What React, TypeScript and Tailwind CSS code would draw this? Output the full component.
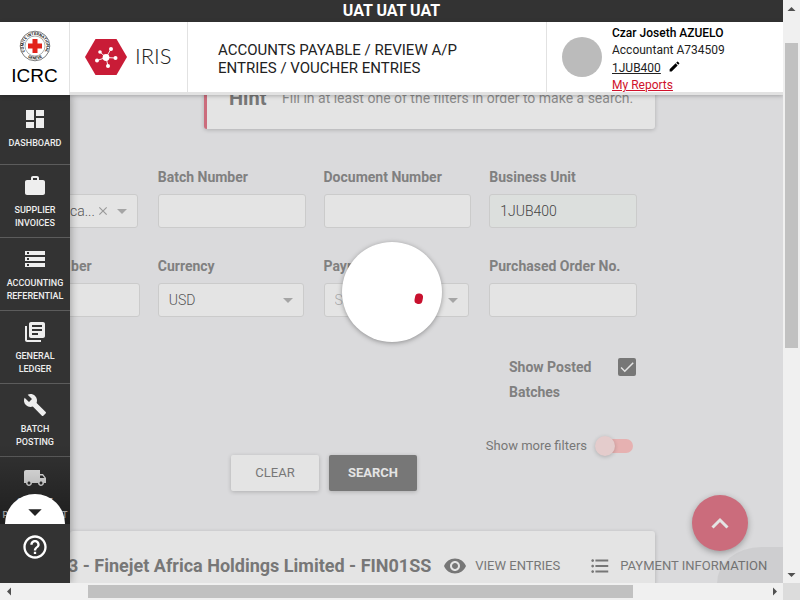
import { useState } from "react";
import type { ReactNode } from "react";
import {
  MdDashboard,
  MdWork,
  MdStorage,
  MdLibraryBooks,
  MdBuild,
  MdLocalShipping,
  MdHelpOutline,
  MdEdit,
  MdArrowDropDown,
  MdRemoveRedEye,
  MdFormatListBulleted,
  MdClose,
  MdCheck,
} from "react-icons/md";

const fieldBox =
  "block h-[34px] rounded-[3px] border border-[#cbcbcb] px-[10px] text-sm font-light outline-none";
const fieldLabel = "block h-[18px] text-sm leading-[18px] font-bold whitespace-nowrap text-[#808080]";

function TextField({ id, label, value, tinted }: { id: string; label: string; value?: string; tinted?: boolean }) {
  return (
    <div>
      <label htmlFor={id} className={fieldLabel}>
        {label}
      </label>
      <input
        id={id}
        type="text"
        defaultValue={value}
        className={`${fieldBox} mt-2 w-full text-[#444] ${tinted ? "bg-[#dcdfdd]" : "bg-[#e4e4e4]"}`}
      />
    </div>
  );
}

function SelectField({ id, label, value, muted }: { id: string; label: string; value: string; muted?: boolean }) {
  return (
    <div className="mr-[2px]">
      <label htmlFor={id} className={fieldLabel}>
        {label}
      </label>
      <div className="relative mt-2">
        <select
          id={id}
          className={`${fieldBox} w-full appearance-none bg-[#e4e4e4] ${muted ? "text-[#aaa]" : "text-[#555]"}`}
        >
          <option>{value}</option>
        </select>
        <MdArrowDropDown className="pointer-events-none absolute top-[5px] right-1 size-6 text-[#a5a5a5]" />
      </div>
    </div>
  );
}

function NavItem({ icon, lines, first }: { icon: ReactNode; lines: string[]; first?: boolean }) {
  return (
    <a
      href="#"
      className={`flex shrink-0 flex-col items-center gap-[6px] border-b border-[#5c5c5c] text-[9px] leading-[13px] font-medium text-[#eee] ${
        first ? "pt-3 pb-[14px]" : "pt-[9px] pb-[7px]"
      }`}
    >
      {icon}
      <span className="text-center">
        {lines.map((l) => (
          <span key={l} className="block whitespace-nowrap">
            {l}
          </span>
        ))}
      </span>
    </a>
  );
}

function IcrcLogo() {
  return (
    <svg viewBox="0 0 32 32" className="size-8" aria-hidden="true">
      <defs>
        <path id="ringTop" d="M6.500 22.500A11.300 11.300 0 1 1 25.500 22.500" />
        <path id="ringBottom" d="M7 26A13.500 13.500 0 0 0 25 26" />
      </defs>
      <circle cx="16" cy="16" r="14.800" fill="#fff" stroke="#444" strokeWidth=".7" />
      <circle cx="16" cy="16" r="10" fill="none" stroke="#777" strokeWidth=".6" />
      <g fill="#222" fontSize="4" fontWeight="700" textAnchor="middle">
        <text>
          <textPath href="#ringTop" startOffset="50%">
            COMITE INTERNATIONAL
          </textPath>
        </text>
        <text>
          <textPath href="#ringBottom" startOffset="50%">
            GENEVE
          </textPath>
        </text>
      </g>
      <path d="M13.500 9h5v4.500H23v5h-4.500V23h-5v-4.500H9v-5h4.500z" fill="#e2231a" />
    </svg>
  );
}

function IrisLogo() {
  return (
    <svg viewBox="0 0 42 36" className="h-9 w-[42px]" aria-hidden="true">
      <path d="M10.500 0h21L42 18 31.500 36h-21L0 18z" fill="#c91c37" />
      <path
        d="M21 18.500L15 13M21 18.500L26 10M21 18.500L30.500 19M21 18.500L23 27M21 18.500L12 21.500"
        stroke="#fff"
        strokeWidth=".9"
      />
      <g fill="#fff">
        <circle cx="21" cy="18.500" r="3.400" />
        <circle cx="15" cy="13" r="1.800" />
        <circle cx="26" cy="10" r="2" />
        <circle cx="30.500" cy="19" r="2" />
        <circle cx="23" cy="27" r="2" />
        <circle cx="12" cy="21.500" r="2" />
      </g>
    </svg>
  );
}

function Header() {
  return (
    <header className="relative z-20 flex h-[73px] shrink-0 bg-white shadow-[0_1px_4px_rgba(0,0,0,0.25)]">
      <div className="flex w-[70px] shrink-0 flex-col items-center border-r border-[#e2e2e2] pt-2">
        <IcrcLogo />
        <span className="mt-1 font-['Liberation_Sans',sans-serif] text-[19px] leading-5 text-black">ICRC</span>
      </div>
      <div className="flex min-w-0 grow border-b-[3px] border-[#e2e2e2]">
        <div className="flex w-[118px] shrink-0 items-center gap-2 border-r border-[#e2e2e2] pl-[15px]">
          <IrisLogo />
          <span className="pb-[3px] font-['Lato',sans-serif] text-[22px] leading-6 font-light text-[#222]">IRIS</span>
        </div>
        <h1 className="min-w-0 flex-1 self-center pt-1 pr-16 pl-[30px] text-[15px] leading-[18px] text-[#222] uppercase">
          Accounts payable / Review A/P entries / Voucher entries
        </h1>
        <div className="flex w-[237px] shrink-0 border-l border-[#e2e2e2] pl-[15px]">
          <div className="size-10 shrink-0 self-center rounded-full bg-[#bbb]" />
          <div className="ml-[10px] flex flex-col items-start pt-[3px] text-xs leading-[17px] text-[#222]">
            <span className="font-medium text-black">Czar Joseth AZUELO</span>
            <span>Accountant A734509</span>
            <span className="flex items-center gap-[7px] pt-px">
              <a href="#" className="underline">
                1JUB400
              </a>
              <button type="button" aria-label="Edit unit" className="mb-1">
                <MdEdit className="size-[13px] text-black" />
              </button>
            </span>
            <a href="#" className="text-[#d0112b] underline">
              My Reports
            </a>
          </div>
        </div>
      </div>
    </header>
  );
}

function Sidebar() {
  return (
    <nav className="relative z-10 flex w-[70px] shrink-0 flex-col bg-[#333] shadow-[1px_0_8px_rgba(0,0,0,0.3)]">
      <div className="relative flex min-h-0 grow flex-col overflow-hidden">
        <NavItem first icon={<MdDashboard className="size-6" />} lines={["DASHBOARD"]} />
        <NavItem icon={<MdWork className="size-6" />} lines={["SUPPLIER", "INVOICES"]} />
        <NavItem icon={<MdStorage className="size-6" />} lines={["ACCOUNTING", "REFERENTIAL"]} />
        <NavItem icon={<MdLibraryBooks className="size-6" />} lines={["GENERAL", "LEDGER"]} />
        <NavItem icon={<MdBuild className="size-6" />} lines={["BATCH", "POSTING"]} />
        <NavItem icon={<MdLocalShipping className="size-6" />} lines={["SERVICE", "PROCUREMENT"]} />
        <div className="pointer-events-none absolute inset-x-0 bottom-0 h-20 bg-linear-to-b from-transparent to-black/40" />
        <button
          type="button"
          aria-label="Scroll menu down"
          className="absolute bottom-0 left-[5px] flex h-[30px] w-[60px] items-center justify-center rounded-t-full bg-white pt-[6px]"
        >
          <MdArrowDropDown className="size-8 text-[#222]" />
        </button>
      </div>
      <a href="#" aria-label="Help" className="flex h-[59px] shrink-0 justify-center pt-[9px] text-white">
        <MdHelpOutline className="size-7" />
      </a>
    </nav>
  );
}

function Filters() {
  const [posted, setPosted] = useState(true);
  return (
    <form className="mt-[39px] mr-[146px] -ml-[78px]" onSubmit={(e) => e.preventDefault()}>
      <div className="grid grid-cols-4 gap-x-[18px] gap-y-[29px]">
        <div className="relative mr-[2px] pt-[26px]">
          <select
            aria-label="Supplier"
            className={`${fieldBox} w-full appearance-none bg-[#e4e4e4] pr-[42px] text-[#555] [text-align-last:right]`}
          >
            <option>ca...</option>
          </select>
          <button type="button" aria-label="Clear supplier" className="absolute right-7 bottom-[10px]">
            <MdClose className="size-[14px] text-[#999]" />
          </button>
          <MdArrowDropDown className="pointer-events-none absolute right-1 bottom-[5px] size-6 text-[#a5a5a5]" />
        </div>
        <TextField id="batch" label="Batch Number" />
        <TextField id="document" label="Document Number" />
        <TextField id="unit" label="Business Unit" value="1JUB400" tinted />
        <div>
          <label htmlFor="number" className={`${fieldLabel} pl-[79px]`}>
            ber
          </label>
          <input id="number" type="text" className={`${fieldBox} mt-2 w-full bg-[#e4e4e4] text-[#444]`} />
        </div>
        <SelectField id="currency" label="Currency" value="USD" />
        <SelectField id="payment" label="Payment" value="Select" muted />
        <TextField id="po" label="Purchased Order No." />
      </div>

      <div className="mt-[38px] flex items-start justify-end">
        <label htmlFor="posted" className="w-[109px] text-sm leading-[25px] font-bold text-[#808080]">
          Show Posted Batches
        </label>
        <span className="relative mt-[3px] mr-px size-[18px]">
          <input
            id="posted"
            type="checkbox"
            checked={posted}
            onChange={() => setPosted(!posted)}
            className="block size-[18px] appearance-none rounded-[2px] bg-[#777]"
          />
          {posted && <MdCheck className="pointer-events-none absolute inset-0 size-[18px] text-[#e4e4e4]" />}
        </span>
      </div>

      <div className="mt-[31px] flex items-start justify-between">
        <div className="mt-[19px] ml-[239px] flex gap-[10px] text-[13px] text-[#777]">
          <button type="reset" className="h-9 w-[88px] rounded-[2px] bg-[#e4e4e4] shadow-[0_1px_4px_rgba(0,0,0,0.2)]">
            CLEAR
          </button>
          <button
            type="submit"
            className="h-9 w-[88px] rounded-[2px] bg-[#777] font-bold text-[#e4e4e4] shadow-[0_1px_4px_rgba(0,0,0,0.2)]"
          >
            SEARCH
          </button>
        </div>
        <label className="mr-1 flex items-center gap-2 text-[13px] leading-5 text-[#777]">
          Show more filters
          <span className="relative flex h-5 w-[38px] items-center">
            <input
              type="checkbox"
              role="switch"
              className="peer ml-[3px] h-[14px] w-[35px] appearance-none rounded-full bg-[#e6b1b1]"
            />
            <span className="pointer-events-none absolute top-0 left-0 size-5 rounded-full bg-[#e4cccc] shadow-[0_1px_4px_rgba(0,0,0,0.2)] peer-checked:left-[18px]" />
          </span>
        </label>
      </div>
    </form>
  );
}

function ScrollArrow({ path }: { path: string }) {
  return (
    <svg viewBox="0 0 17 17" className="size-[17px] shrink-0" aria-hidden="true">
      <path d={path} fill="#505050" />
    </svg>
  );
}

export default function App() {
  return (
    <div className="grid h-screen grid-cols-[minmax(0,1fr)_17px] grid-rows-[minmax(0,1fr)_17px] overflow-hidden bg-[#f0f0f0] font-['Roboto',sans-serif]">
      <div className="relative flex min-h-0 flex-col overflow-hidden bg-[#dadadc]">
        <div className="h-[22px] shrink-0 bg-[#333] text-center text-base leading-[21px] font-bold text-white">
          UAT UAT UAT
        </div>
        <Header />
        <div className="flex min-h-0 grow">
          <Sidebar />
          <main className="relative min-w-0 grow overflow-hidden">
            <section className="-mt-7 mr-32 ml-[134px] flex h-[62px] items-center rounded-[3px] border-l-[3px] border-[#cb6c7c] bg-[#e4e4e4] pl-[22px] whitespace-nowrap text-[#777] shadow-[0_1px_4px_rgba(0,0,0,0.2)]">
              <h2 className="w-[53px] text-xl leading-6 font-bold">Hint</h2>
              <p className="text-sm text-[#8a8a8a]">Fill in at least one of the filters in order to make a search.</p>
            </section>
            <Filters />
            <section className="mt-10 mr-32 flex h-[69px] items-center rounded-t-[3px] bg-[#e4e4e4] text-[13px] whitespace-nowrap text-[#777] shadow-[0_1px_4px_rgba(0,0,0,0.2)]">
              <h2 className="-ml-[2px] text-lg leading-6 font-bold">3 - Finejet Africa Holdings Limited - FIN01SS</h2>
              <button type="button" className="ml-3 flex items-center gap-2">
                <MdRemoveRedEye className="size-6" />
                VIEW ENTRIES
              </button>
              <button type="button" className="ml-7 flex items-center gap-2">
                <MdFormatListBulleted className="size-6 p-px" />
                PAYMENT INFORMATION
              </button>
            </section>
          </main>
        </div>
        <div className="pointer-events-none absolute right-0 bottom-0 h-9 w-[66px] bg-black/5 [border-top-left-radius:44px_36px]" />
        <button
          type="button"
          aria-label="Back to top"
          className="absolute right-[35px] bottom-8 flex size-14 items-center justify-center rounded-full bg-[#cb6c7c] shadow-[0_2px_6px_rgba(0,0,0,0.3)]"
        >
          <svg viewBox="0 0 18 12" className="h-3 w-[18px]" fill="none" aria-hidden="true">
            <path d="M1.500 10.500L9 3l7.500 7.500" stroke="#e4e4e4" strokeWidth="3" />
          </svg>
        </button>
        <div
          role="status"
          aria-label="Loading"
          className="absolute top-1/2 left-1/2 z-30 size-[100px] -translate-1/2 rounded-full bg-white shadow-[0_1px_5px_rgba(0,0,0,0.35)]"
        >
          <svg viewBox="0 0 100 100" className="size-full" aria-hidden="true">
            <path d="M77 55.500L76.500 58" stroke="#c8102e" strokeWidth="8" strokeLinecap="round" />
          </svg>
        </div>
      </div>

      <div className="flex flex-col">
        <ScrollArrow path="M4.500 11h8l-4-4z" />
        <div className="relative grow">
          <div className="absolute inset-x-[2px] top-[26px] h-5/9 bg-[#c1c1c1]" />
        </div>
        <ScrollArrow path="M4.500 7h8l-4 4z" />
      </div>
      <div className="flex">
        <ScrollArrow path="M11 4.500v8l-4-4z" />
        <div className="relative grow">
          <div className="absolute inset-y-[2px] left-[71px] w-8/11 bg-[#c1c1c1]" />
        </div>
        <ScrollArrow path="M7 4.500v8l4-4z" />
      </div>
      <div className="bg-[#dcdcdc]" />
    </div>
  );
}
